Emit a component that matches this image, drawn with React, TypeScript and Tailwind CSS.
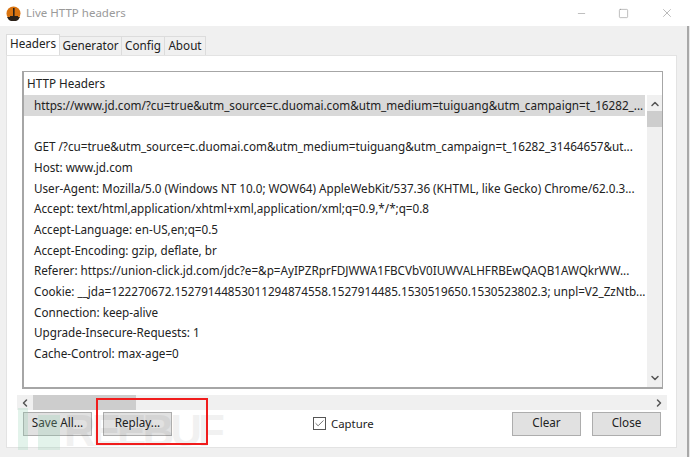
import { ChevronDown, ChevronLeft, ChevronRight, ChevronUp, Check, Minus, Square, X } from "lucide-react";

const rows = [
  "GET /?cu=true&utm_source=c.duomai.com&utm_medium=tuiguang&utm_campaign=t_16282_31464657&ut...",
  "Host: www.jd.com",
  "User-Agent: Mozilla/5.0 (Windows NT 10.0; WOW64) AppleWebKit/537.36 (KHTML, like Gecko) Chrome/62.0.3...",
  "Accept: text/html,application/xhtml+xml,application/xml;q=0.9,*/*;q=0.8",
  "Accept-Language: en-US,en;q=0.5",
  "Accept-Encoding: gzip, deflate, br",
  "Referer: https://union-click.jd.com/jdc?e=&p=AyIPZRprFDJWWA1FBCVbV0IUWVALHFRBEwQAQB1AWQkrWW...",
  "Cookie: __jda=122270672.1527914485301129487 4558.1527914485.1530519650.1530523802.3; unpl=V2_ZzNtb...".replace("487 4558", "4874558"),
  "Connection: keep-alive",
  "Upgrade-Insecure-Requests: 1",
  "Cache-Control: max-age=0",
];

function Btn({ label }: { label: string }) {
  return (
    <button className="w-[69px] h-[24px] bg-[#e1e1e1] border border-[#adadad] text-[11.7px] text-[#222] flex items-center justify-center pb-[2px]">
      {label}
    </button>
  );
}

export default function App() {
  return (
    <div className="relative w-[690px] h-[457px] overflow-hidden bg-[#f0f0f0] font-['Noto_Sans',sans-serif] text-[11.7px] text-[#222]">
      {/* title bar */}
      <div className="h-[26px] bg-white flex items-center pl-[6px]">
        <svg width="15" height="15" viewBox="0 0 15 15">
          <circle cx="7.5" cy="7.5" r="7" fill="#d9730f" />
          <path d="M1 11a7 7 0 0 0 13 0z" fill="#2b2118" />
          <path d="M7 2h1.6v8H12v1.4H4V10h3z" fill="#2b2118" />
        </svg>
        <span className="ml-[5px] text-[#9a9a9a] text-[11.5px]">Live HTTP headers</span>
        <div className="ml-auto mr-[16px] flex items-center gap-[31px] text-[#8a8a8a]">
          <Minus size={11} strokeWidth={1.2} />
          <Square size={11} strokeWidth={1.2} />
          <X size={14} strokeWidth={1} />
        </div>
      </div>

      {/* tabs */}
      <div className="flex items-end pl-[6px] pt-[8px] h-[29px] relative z-10">
        <div className="h-[21px] w-[54px] bg-white border border-b-0 border-[#dcdcdc] flex items-center justify-center pb-[3px]">Headers</div>
        <div className="h-[19px] w-[62px] bg-[#f0f0f0] border border-b-0 border-l-0 border-[#dcdcdc] flex items-center justify-center">Generator</div>
        <div className="h-[19px] w-[43px] bg-[#f0f0f0] border border-b-0 border-l-0 border-[#dcdcdc] flex items-center justify-center">Config</div>
        <div className="h-[19px] w-[41px] bg-[#f0f0f0] border border-b-0 border-l-0 border-[#dcdcdc] flex items-center justify-center">About</div>
      </div>

      {/* panel */}
      <div className="ml-[6px] w-[671px] h-[393px] bg-white border border-[#e3e3e3] pt-[15px] pl-[15px] flex flex-col">
        <div className="w-[641px] h-[318px] border-2 border-t-[1px] border-[#a6a6a6] border-r-[1px] flex flex-col">
          <div className="h-[23px] pl-[3px] flex items-center pt-[1px]">HTTP Headers</div>
          <div className="flex flex-1 min-h-0">
            <div className="flex-1 min-w-0">
              <div className="h-[21px] bg-[#d9d9d9] pl-[10px] flex items-center whitespace-nowrap overflow-hidden">
                https://www.jd.com/?cu=true&amp;utm_source=c.duomai.com&amp;utm_medium=tuiguang&amp;utm_campaign=t_16282_...
              </div>
              <div className="h-[20.7px]" />
              {rows.map((r) => (
                <div key={r} className="h-[20.7px] pl-[10px] flex items-center whitespace-nowrap overflow-hidden tracking-[-0.01px]">
                  {r}
                </div>
              ))}
            </div>
            <div className="w-[15px] ml-[2px] bg-[#f0f0f0] flex flex-col items-center">
              <ChevronUp size={12} strokeWidth={3} className="mt-[2px] text-[#555] h-[14px]" />
              <div className="w-full h-[16px] bg-[#cdcdcd]" />
              <ChevronDown size={12} strokeWidth={3} className="mt-auto mb-[3px] text-[#555]" />
            </div>
          </div>
        </div>

        {/* horizontal scrollbar */}
        <div className="-ml-[5px] mt-[6px] w-[650px] h-[15px] bg-[#f0f0f0] flex items-center">
          <ChevronLeft size={12} strokeWidth={3} className="ml-[2px] text-[#555]" />
          <div className="ml-[2px] w-[103px] h-full bg-[#cdcdcd]" />
          <ChevronRight size={12} strokeWidth={3} className="ml-auto mr-[2px] text-[#555]" />
        </div>

        {/* buttons */}
        <div className="flex items-center mt-[2px] pl-[1px]">
          <Btn label="Save All..." />
          <div className="ml-[11px]">
            <Btn label="Replay..." />
          </div>
          <div className="ml-[141px] flex items-center">
            <div className="w-[13px] h-[13px] border border-[#555] flex items-center justify-center">
              <Check size={11} strokeWidth={1.5} className="text-[#333]" />
            </div>
            <span className="ml-[5px] text-[11.4px]">Capture</span>
          </div>
          <div className="ml-auto mr-[15px] flex gap-[11px]">
            <Btn label="Clear" />
            <Btn label="Close" />
          </div>
        </div>
      </div>

      {/* FREEBUF watermark */}
      <div className="absolute left-[18px] top-[408px] w-[10px] h-[42px] bg-[#8fd0b0] opacity-25" />
      <div className="absolute left-[38px] top-[415px] w-[22px] h-[35px] bg-[#8fd0b0] opacity-25" />
      <div className="absolute left-[64px] top-[409px] font-['Liberation_Sans',sans-serif] font-bold text-[44px] leading-[44px] tracking-[-4px] text-black opacity-[0.05] whitespace-nowrap">
        REEBUF
      </div>

      {/* red highlight on top of the screenshot */}
      <div className="absolute left-[96px] top-[398px] w-[112px] h-[47px] border-2 border-[#f01c1c]" />

      {/* window edge and the window behind it */}
      <div className="absolute right-0 top-[26px] bottom-0 w-[3px] border-l-2 border-[#a8a8a8] bg-[#e8e8e8]" />
    </div>
  );
}
